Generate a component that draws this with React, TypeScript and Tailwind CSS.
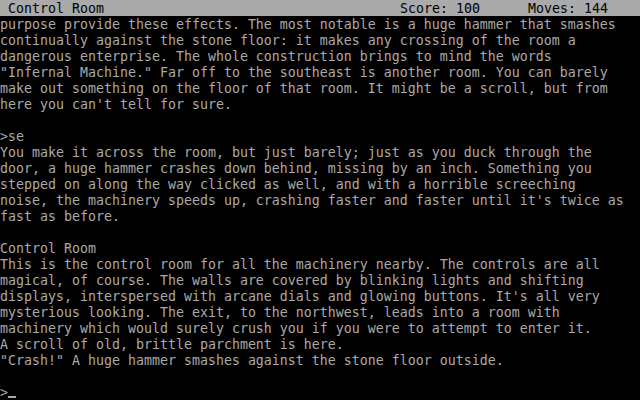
const lines = [
  "purpose provide these effects. The most notable is a huge hammer that smashes",
  "continually against the stone floor: it makes any crossing of the room a",
  "dangerous enterprise. The whole construction brings to mind the words",
  "\"Infernal Machine.\" Far off to the southeast is another room. You can barely",
  "make out something on the floor of that room. It might be a scroll, but from",
  "here you can't tell for sure.",
  "",
  ">se",
  "You make it across the room, but just barely; just as you duck through the",
  "door, a huge hammer crashes down behind, missing by an inch. Something you",
  "stepped on along the way clicked as well, and with a horrible screeching",
  "noise, the machinery speeds up, crashing faster and faster until it's twice as",
  "fast as before.",
  "",
  "Control Room",
  "This is the control room for all the machinery nearby. The controls are all",
  "magical, of course. The walls are covered by blinking lights and shifting",
  "displays, interspersed with arcane dials and glowing buttons. It's all very",
  "mysterious looking. The exit, to the northwest, leads into a room with",
  "machinery which would surely crush you if you were to attempt to enter it.",
  "A scroll of old, brittle parchment is here.",
  "\"Crash!\" A huge hammer smashes against the stone floor outside.",
  "",
];

export default function App() {
  return (
    <div className="w-[640px] h-[400px] overflow-hidden bg-black text-[#aaaaaa] font-['DejaVu_Sans_Mono','Liberation_Mono',monospace] text-[13.29px] leading-[16px]">
      <div className="flex h-4 bg-[#aaaaaa] text-black whitespace-pre">
        <span className="w-[400px] pt-px"> Control Room</span>
        <span className="w-[128px] pt-px">Score: 100</span>
        <span className="pt-px">Moves: 144</span>
      </div>
      {lines.map((l, i) => (
        <div key={i} className="h-4 pt-px whitespace-pre">
          {l}
        </div>
      ))}
      <div className="flex h-4 items-start whitespace-pre">
        <span className="pt-px">&gt;</span>
        <span className="mt-[12px] h-[2px] w-2 bg-[#aaaaaa]" />
      </div>
    </div>
  );
}
